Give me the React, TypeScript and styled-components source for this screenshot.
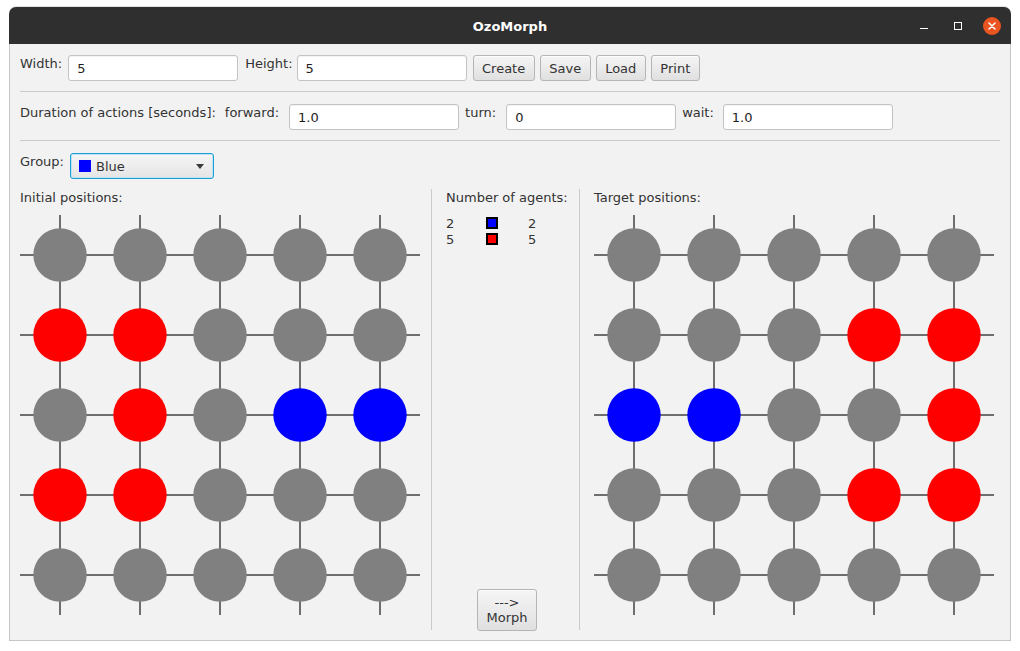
import React from "react";
import styled, { createGlobalStyle } from "styled-components";

const GlobalStyle = createGlobalStyle`
  html, body { margin: 0; padding: 0; background: #ffffff; }
  body { font-family: "DejaVu Sans", "Liberation Sans", sans-serif; font-size: 13px; color: #333333; }
`;

const Window = styled.div`
  margin: 7px 0 0 9px;
  width: 1002px;
`;

const TitleBar = styled.div`
  height: 37px;
  background: #2f2f2f;
  border-radius: 7px 7px 0 0;
  display: grid;
  grid-template-columns: 1fr auto 1fr;
  align-items: center;
  box-shadow: 0 -1px 0 rgba(0, 0, 0, 0.12);
`;

const Title = styled.div`
  grid-column: 2;
  color: #ffffff;
  font-weight: bold;
  font-size: 13px;
  font-family: "DejaVu Sans", sans-serif;
  padding-top: 1px;
`;

const Controls = styled.div`
  grid-column: 3;
  justify-self: end;
  display: flex;
  align-items: center;
  padding-right: 10px;
`;

const MinIcon = styled.span`
  width: 8px;
  height: 1.5px;
  background: #ffffff;
  margin-top: 6px;
`;

const MaxIcon = styled.span`
  width: 6px;
  height: 6px;
  border: 1.2px solid #ffffff;
  margin-left: 26px;
`;

const CloseButton = styled.span`
  width: 18px;
  height: 18px;
  border-radius: 50%;
  background: #e95420;
  margin-left: 21px;
  display: flex;
  align-items: center;
  justify-content: center;
`;

const Content = styled.div`
  height: 597px;
  box-sizing: border-box;
  background: #f2f2f2;
  border: 1px solid #c6c6c6;
  border-top: none;
  padding: 11px 10px 10px 10px;
  display: flex;
  flex-direction: column;
`;

const Row = styled.div`
  display: flex;
  align-items: flex-start;
  height: 26px;
`;

const Label = styled.span<{ $mr?: number }>`
  font-size: 13px;
  line-height: 15px;
  padding-top: 1px;
  color: #333333;
  white-space: nowrap;
  margin-right: ${(p) => p.$mr ?? 0}px;
`;

const TextField = styled.div<{ $mr?: number }>`
  width: 170px;
  height: 26px;
  box-sizing: border-box;
  border: 1px solid #c3c3c3;
  border-radius: 3px;
  background: #ffffff;
  box-shadow: inset 0 1px 1px rgba(0, 0, 0, 0.05);
  padding: 0 8px;
  display: flex;
  align-items: center;
  font-size: 13px;
  color: #1e1e1e;
  margin-right: ${(p) => p.$mr ?? 0}px;
`;

const ButtonGroup = styled.div`
  display: flex;
  gap: 5px;
  margin-left: 6px;
`;

const Button = styled.div`
  height: 26px;
  box-sizing: border-box;
  padding: 0 8.5px;
  border: 1px solid #b5b5b5;
  border-radius: 3px;
  background: linear-gradient(#f5f5f5, #e0e0e0);
  box-shadow: inset 0 1px 0 rgba(255, 255, 255, 0.7);
  display: flex;
  align-items: center;
  justify-content: center;
  font-size: 13px;
  color: #333333;
  white-space: nowrap;
`;

const Separator = styled.div<{ $top: number; $bottom: number }>`
  height: 1px;
  background: #cbcbcb;
  margin-top: ${(p) => p.$top}px;
  margin-bottom: ${(p) => p.$bottom}px;
`;

const Combo = styled.div`
  width: 144px;
  height: 26px;
  box-sizing: border-box;
  border: 1px solid #1a9fd6;
  border-radius: 3px;
  background: linear-gradient(#f6f6f6, #e4e4e4);
  box-shadow: inset 0 0 0 1px #bfe3f2;
  display: flex;
  align-items: center;
  padding: 0 9px 0 8px;
  font-size: 13px;
  color: #333333;
`;

const Swatch = styled.span<{ $color: string }>`
  width: 12px;
  height: 12px;
  background: ${(p) => p.$color};
  margin-right: 5px;
  flex: none;
`;

const ComboText = styled.span`
  flex: 1;
`;

const Arrow = styled.span`
  width: 0;
  height: 0;
  border-left: 4.5px solid transparent;
  border-right: 4.5px solid transparent;
  border-top: 5px solid #3a3a3a;
`;

const Boards = styled.div`
  margin-top: 10px;
  height: 441px;
  display: flex;
`;

const BoardColumn = styled.div<{ $pl?: number }>`
  display: flex;
  flex-direction: column;
  padding-left: ${(p) => p.$pl ?? 0}px;
`;

const SectionLabel = styled.div`
  font-size: 13px;
  line-height: 15px;
  margin-top: 1px;
  color: #333333;
`;

const BoardSvg = styled.svg`
  display: block;
  margin-top: 10px;
`;

const VSeparator = styled.div<{ $ml?: number }>`
  width: 1px;
  background: #cbcbcb;
  margin-left: ${(p) => p.$ml ?? 0}px;
`;

const Middle = styled.div`
  width: 147px;
  box-sizing: border-box;
  padding-left: 14px;
  display: flex;
  flex-direction: column;
`;

const Counts = styled.div`
  margin-top: 11px;
  display: grid;
  grid-template-columns: 40px 42px auto;
  grid-auto-rows: 16px;
  align-items: start;
  font-size: 13px;
  line-height: 16px;
  color: #333333;
`;

const CountSwatch = styled.span<{ $color: string }>`
  display: block;
  width: 12px;
  height: 12px;
  box-sizing: border-box;
  border: 2px solid #000000;
  background: ${(p) => p.$color};
  margin-top: 1px;
`;

const MorphButton = styled(Button)`
  margin-top: auto;
  margin-left: 31px;
  width: 60px;
  height: 42px;
  flex-direction: column;
  line-height: 15px;
  padding: 0;
  margin-bottom: -1px;
`;

type Cell = "g" | "r" | "b";
const COLORS: Record<Cell, string> = { g: "#808080", r: "#ff0000", b: "#0000ff" };

const initialBoard: Cell[][] = [
  ["g", "g", "g", "g", "g"],
  ["r", "r", "g", "g", "g"],
  ["g", "r", "g", "b", "b"],
  ["r", "r", "g", "g", "g"],
  ["g", "g", "g", "g", "g"],
];

const targetBoard: Cell[][] = [
  ["g", "g", "g", "g", "g"],
  ["g", "g", "g", "r", "r"],
  ["b", "b", "g", "g", "r"],
  ["g", "g", "g", "r", "r"],
  ["g", "g", "g", "g", "g"],
];

const Board: React.FC<{ cells: Cell[][] }> = ({ cells }) => {
  const pos = [40, 120, 200, 280, 360];
  return (
    <BoardSvg width={400} height={400} viewBox="0 0 400 400">
      {pos.map((p) => (
        <line key={"v" + p} x1={p} y1={0} x2={p} y2={400} stroke="#6e6e6e" strokeWidth={2} />
      ))}
      {pos.map((p) => (
        <line key={"h" + p} x1={0} y1={p} x2={400} y2={p} stroke="#6e6e6e" strokeWidth={2} />
      ))}
      {cells.map((row, r) =>
        row.map((c, col) => (
          <circle key={r + "-" + col} cx={pos[col]} cy={pos[r]} r={26.7} fill={COLORS[c]} />
        ))
      )}
    </BoardSvg>
  );
};

export default function App() {
  return (
    <>
      <GlobalStyle />
      <Window>
        <TitleBar>
          <Title>OzoMorph</Title>
          <Controls>
            <MinIcon />
            <MaxIcon />
            <CloseButton>
              <svg width="8" height="8" viewBox="0 0 8 8">
                <path d="M1 1 L7 7 M7 1 L1 7" stroke="#ffffff" strokeWidth="1.5" strokeLinecap="round" />
              </svg>
            </CloseButton>
          </Controls>
        </TitleBar>
        <Content>
          <Row>
            <Label $mr={6}>Width:</Label>
            <TextField $mr={7}>5</TextField>
            <Label $mr={4}>Height:</Label>
            <TextField>5</TextField>
            <ButtonGroup>
              <Button>Create</Button>
              <Button>Save</Button>
              <Button>Load</Button>
              <Button>Print</Button>
            </ButtonGroup>
          </Row>
          <Separator $top={10} $bottom={12} />
          <Row>
            <Label $mr={9}>Duration of actions [seconds]:</Label>
            <Label $mr={10}>forward:</Label>
            <TextField $mr={6}>1.0</TextField>
            <Label $mr={10}>turn:</Label>
            <TextField $mr={6}>0</TextField>
            <Label $mr={9}>wait:</Label>
            <TextField>1.0</TextField>
          </Row>
          <Separator $top={10} $bottom={12} />
          <Row>
            <Label $mr={6}>Group:</Label>
            <Combo>
              <Swatch $color="#0000ff" />
              <ComboText>Blue</ComboText>
              <Arrow />
            </Combo>
          </Row>
          <Boards>
            <BoardColumn>
              <SectionLabel>Initial positions:</SectionLabel>
              <Board cells={initialBoard} />
            </BoardColumn>
            <VSeparator $ml={11} />
            <Middle>
              <SectionLabel>Number of agents:</SectionLabel>
              <Counts>
                <span>2</span>
                <CountSwatch $color="#0000ff" />
                <span>2</span>
                <span>5</span>
                <CountSwatch $color="#ff0000" />
                <span>5</span>
              </Counts>
              <MorphButton>
                <span>---&gt;</span>
                <span>Morph</span>
              </MorphButton>
            </Middle>
            <VSeparator />
            <BoardColumn $pl={14}>
              <SectionLabel>Target positions:</SectionLabel>
              <Board cells={targetBoard} />
            </BoardColumn>
          </Boards>
        </Content>
      </Window>
    </>
  );
}
